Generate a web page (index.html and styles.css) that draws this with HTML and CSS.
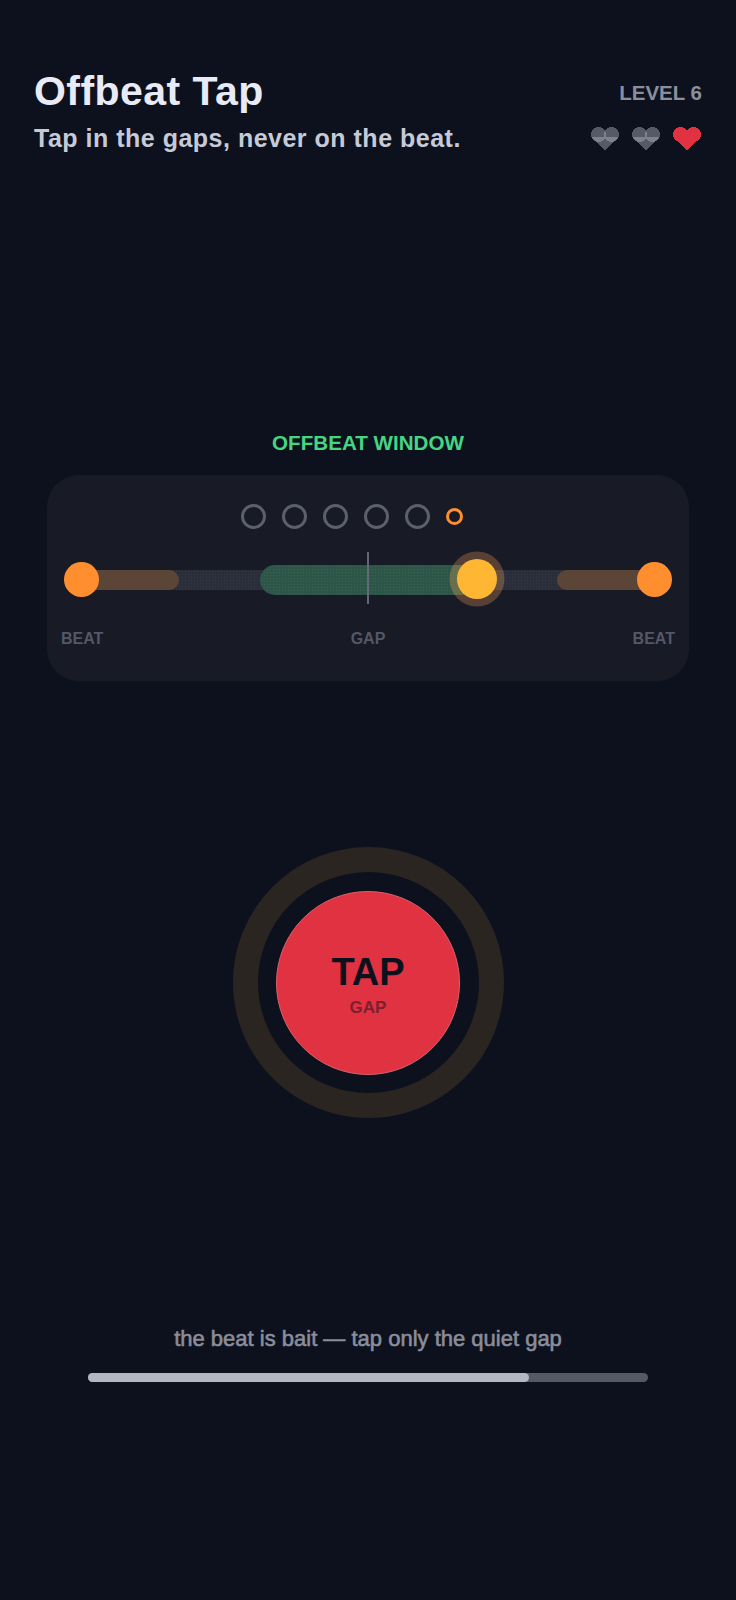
FILE: index.html
```html
<!DOCTYPE html>
<html lang="en">
<head>
  <meta charset="UTF-8">
  <meta name="viewport" content="width=device-width, initial-scale=1.0">
  <title>Offbeat Tap</title>
  <link rel="stylesheet" href="styles.css">
</head>
<body>
  <header class="top">
    <div class="top-text">
      <h1>Offbeat Tap</h1>
      <p class="sub">Tap in the gaps, never on the beat.</p>
    </div>
    <div class="top-side">
      <div class="level">LEVEL 6</div>
      <div class="hearts">
        <svg class="heart lost" viewBox="0 0 28 24" shape-rendering="crispEdges"><circle cx="7.5" cy="7.5" r="7.5"/><circle cx="20.5" cy="7.5" r="7.5"/><polygon points="0,9.5 28,9.5 14,24"/></svg>
        <svg class="heart lost" viewBox="0 0 28 24" shape-rendering="crispEdges"><circle cx="7.5" cy="7.5" r="7.5"/><circle cx="20.5" cy="7.5" r="7.5"/><polygon points="0,9.5 28,9.5 14,24"/></svg>
        <svg class="heart" viewBox="0 0 28 24" shape-rendering="crispEdges"><circle cx="7.5" cy="7.5" r="7.5"/><circle cx="20.5" cy="7.5" r="7.5"/><polygon points="0,9.5 28,9.5 14,24"/></svg>
      </div>
    </div>
  </header>

  <section class="window">
    <div class="window-title">OFFBEAT WINDOW</div>
    <div class="panel">
      <div class="dots">
        <span class="dot"></span>
        <span class="dot"></span>
        <span class="dot"></span>
        <span class="dot"></span>
        <span class="dot"></span>
        <span class="dot now"></span>
      </div>
      <div class="track">
        <div class="rail"></div>
        <div class="zone beat-left"></div>
        <div class="zone beat-right"></div>
        <div class="zone gap"></div>
        <div class="center-line"></div>
        <div class="beat-dot left"></div>
        <div class="beat-dot right"></div>
        <div class="cursor"></div>
      </div>
      <div class="labels">
        <span>BEAT</span>
        <span>GAP</span>
        <span>BEAT</span>
      </div>
    </div>
  </section>

  <div class="tap-area">
    <div class="tap-ring">
      <button class="tap-btn">
        <span class="tap-word">TAP</span>
        <span class="tap-hint">GAP</span>
      </button>
    </div>
  </div>

  <footer class="bottom">
    <p class="hint">the beat is bait — tap only the quiet gap</p>
    <div class="progress"><div class="progress-fill"></div></div>
  </footer>
</body>
</html>
```

FILE: styles.css
```css
* {
  box-sizing: border-box;
}
body {
  margin: 0;
  min-height: 1600px;
  background: #0d111d;
  font-family: "Liberation Sans", Arial, sans-serif;
  font-weight: 700;
}
.top {
  display: flex;
  justify-content: space-between;
  padding: 68px 34px 0;
}
h1 {
  margin: 0;
  font-size: 41px;
  line-height: 46px;
  letter-spacing: 0.45px;
  color: #e8ebf6;
}
.sub {
  margin: 9px 0 0;
  font-size: 25px;
  line-height: 30px;
  letter-spacing: 0.5px;
  color: #c6cad6;
}
.top-side {
  display: flex;
  flex-direction: column;
  align-items: flex-end;
  padding-top: 13px;
}
.level {
  font-size: 20.5px;
  line-height: 24px;
  color: #8b8f9d;
}
.hearts {
  display: flex;
  gap: 13px;
  margin-top: 22px;
  margin-right: 1px;
}
.heart {
  display: block;
  width: 28px;
  height: 24px;
  fill: #e03240;
}
.heart.lost {
  fill: #b0b4c2;
  fill-opacity: 0.45;
}
.window {
  margin-top: 278px;
  padding: 0 47px;
}
.window-title {
  text-align: center;
  font-size: 20.6px;
  line-height: 24px;
  color: #45d583;
}
.panel {
  margin-top: 20px;
  height: 206px;
  padding: 29px 13px 0 13px;
  background: #181a26;
  border-radius: 32px;
}
.dots {
  display: flex;
  align-items: center;
  gap: 16px;
  padding-left: 181px;
  height: 25px;
}
.dot {
  width: 25px;
  height: 25px;
  border: 3px solid #5c5f6c;
  border-radius: 50%;
}
.dot.now {
  width: 17px;
  height: 17px;
  border: 3.5px solid #ff8f2e;
}
.track {
  position: relative;
  height: 55px;
  margin-top: 23px;
}
.rail,
.zone,
.center-line,
.beat-dot,
.cursor {
  position: absolute;
}
.rail {
  left: 22px;
  right: 22px;
  top: 18px;
  height: 20px;
  background-color: #2a2e3a;
  background-image: radial-gradient(circle, #353946 0.8px, transparent 0.8px);
  background-size: 3px 3px;
}
.zone {
  top: 18px;
  height: 20px;
  background: #5b4537;
  border-radius: 10px;
}
.beat-left {
  left: 22px;
  width: 97px;
}
.beat-right {
  right: 22px;
  width: 97px;
}
.zone.gap {
  left: 200px;
  width: 216px;
  top: 13px;
  height: 30px;
  border-radius: 15px;
  background-color: #2d5648;
  background-image: radial-gradient(circle, #376452 1px, transparent 1px);
  background-size: 3px 3px;
}
.center-line {
  left: 307px;
  top: 0;
  width: 1.5px;
  height: 52px;
  background: #636775;
}
.beat-dot {
  top: 10px;
  width: 35px;
  height: 35px;
  border-radius: 50%;
  background: #ff8f2e;
}
.beat-dot.left {
  left: 4px;
}
.beat-dot.right {
  right: 4px;
}
.cursor {
  left: 397px;
  top: 7px;
  width: 40px;
  height: 40px;
  border-radius: 50%;
  background: #ffb733;
  box-shadow: 0 0 0 7.5px rgba(255, 170, 90, 0.28);
}
.labels {
  display: flex;
  justify-content: space-between;
  margin-top: 22px;
  padding: 0 1px;
  font-size: 16px;
  line-height: 20px;
  color: #545766;
}
.tap-area {
  display: flex;
  justify-content: center;
  margin-top: 166px;
}
.tap-ring {
  display: flex;
  align-items: center;
  justify-content: center;
  width: 271px;
  height: 271px;
  border: 25.5px solid #2b2522;
  border-radius: 50%;
}
.tap-btn {
  display: flex;
  flex-direction: column;
  align-items: center;
  justify-content: center;
  flex: none;
  width: 184px;
  height: 184px;
  padding: 3px 0 0;
  border: 1.5px solid #d8626e;
  border-radius: 50%;
  background: #e03240;
  font-family: inherit;
  font-weight: 700;
}
.tap-word {
  font-size: 38px;
  line-height: 44px;
  color: #0d111d;
}
.tap-hint {
  margin-top: 4px;
  font-size: 17px;
  line-height: 20px;
  color: #7c2030;
}
.bottom {
  display: flex;
  flex-direction: column;
  align-items: center;
  margin-top: 208px;
}
.hint {
  margin: 0;
  font-size: 22px;
  font-weight: 400;
  line-height: 26px;
  -webkit-text-stroke: 0.6px #8a8d9a;
  color: #8a8d9a;
}
.progress {
  width: 560px;
  height: 9px;
  margin-top: 21px;
  background: #565866;
  border-radius: 5px;
}
.progress-fill {
  width: 78.8%;
  height: 100%;
  background: #b2b7c4;
  border-radius: 5px;
}
```
